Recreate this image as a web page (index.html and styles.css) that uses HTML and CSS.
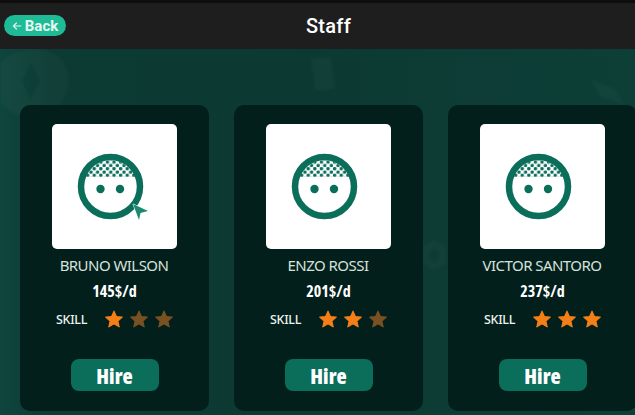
FILE: index.html
```html
<!DOCTYPE html>
<html lang="en">
<head>
<meta charset="utf-8">
<title>Staff</title>
<link rel="stylesheet" href="styles.css">
</head>
<body>
<svg width="0" height="0" class="defs">
  <defs>
    <pattern id="hatch" width="6.6" height="6.6" patternUnits="userSpaceOnUse" x="1" y="36.5">
      <circle cx="1.65" cy="1.65" r="1.75" fill="#0b6e5b"/>
      <circle cx="4.95" cy="4.95" r="1.75" fill="#0b6e5b"/>
    </pattern>
    <symbol id="face" viewBox="0 0 125 125">
      <path d="M33.5 53 A27 27 0 0 1 83.5 53 Z" fill="url(#hatch)"/>
      <circle cx="58.5" cy="62.5" r="29.5" fill="none" stroke="#0b6e5b" stroke-width="6.5"/>
      <circle cx="48.5" cy="65" r="4.2" fill="#0b6e5b"/>
      <circle cx="68" cy="65" r="4.2" fill="#0b6e5b"/>
    </symbol>
    <symbol id="star" viewBox="0 0 24 24">
      <path d="M12 1.5 L15.2 8.6 L23 9.5 L17.2 14.8 L18.9 22.5 L12 18.5 L5.1 22.5 L6.8 14.8 L1 9.5 L8.8 8.6 Z" stroke-linejoin="round" stroke-width="1.5"/>
    </symbol>
  </defs>
</svg>
<header class="topbar">
  <a class="back"><svg class="back-arrow" viewBox="0 0 10 10" width="10" height="10"><path d="M9.2 5H1.5M4.8 1.6 1.4 5l3.4 3.4" fill="none" stroke="currentColor" stroke-width="1.2"/></svg>Back</a>
  <h1 class="title">Staff</h1>
</header>
<main class="stage">
  <svg class="decor" viewBox="0 0 635 366" width="635" height="366">
    <g fill="#fff" opacity=".028">
      <path d="M35 0C60 0 70 16 68 36 66 56 50 68 30 68 8 68-6 52-6 32-6 14 10 0 35 0ZM31 14 22 32 31 50 40 32Z" fill-rule="evenodd"/>
      <path d="M311 10 331 8 335 40 315 42Z"/>
      <path d="M434 190 446 198 446 214 434 222 422 214 422 198ZM434 198 428 206 434 214 440 206Z" fill-rule="evenodd"/>
      <path d="M590 30 615 40 625 56 600 48Z"/>
    </g>
  </svg>
  <div class="cards">
    <article class="card">
      <div class="photo">
        <svg class="face" width="125" height="125"><use href="#face"/><path class="cursor" d="M81 80 96 87 88.5 89 87 96Z"/></svg>
      </div>
      <div class="name">BRUNO WILSON</div>
      <div class="price">145$/d</div>
      <div class="skill">
        <span class="skill-label">SKILL</span>
        <svg class="star on"><use href="#star"/></svg>
        <svg class="star"><use href="#star"/></svg>
        <svg class="star"><use href="#star"/></svg>
      </div>
      <button class="hire">Hire</button>
    </article>
    <article class="card">
      <div class="photo">
        <svg class="face" width="125" height="125"><use href="#face"/></svg>
      </div>
      <div class="name">ENZO ROSSI</div>
      <div class="price">201$/d</div>
      <div class="skill">
        <span class="skill-label">SKILL</span>
        <svg class="star on"><use href="#star"/></svg>
        <svg class="star on"><use href="#star"/></svg>
        <svg class="star"><use href="#star"/></svg>
      </div>
      <button class="hire">Hire</button>
    </article>
    <article class="card">
      <div class="photo">
        <svg class="face" width="125" height="125"><use href="#face"/></svg>
      </div>
      <div class="name">VICTOR SANTORO</div>
      <div class="price">237$/d</div>
      <div class="skill">
        <span class="skill-label">SKILL</span>
        <svg class="star on"><use href="#star"/></svg>
        <svg class="star on"><use href="#star"/></svg>
        <svg class="star on"><use href="#star"/></svg>
      </div>
      <button class="hire">Hire</button>
    </article>
  </div>
</main>
</body>
</html>
```
FILE: styles.css
```css
* { box-sizing: border-box; }
html, body { margin: 0; padding: 0; }
body {
  width: 635px;
  height: 415px;
  overflow: hidden;
  background: #0c3a33;
  font-family: "Noto Sans", "Open Sans", sans-serif;
  display: flex;
  flex-direction: column;
}
.defs { position: absolute; }
.topbar {
  height: 49px;
  flex: none;
  background: #1e1e1e;
  border-top: 3px solid #0d0d0d;
  position: relative;
  display: flex;
  align-items: center;
  justify-content: center;
}
.title {
  margin: 0;
  padding: 0 0 1px 22px;
  font-family: Roboto, sans-serif;
  font-size: 20px;
  font-weight: 500;
  color: #fff;
  letter-spacing: .3px;
}
.back {
  position: absolute;
  left: 4px;
  top: 12px;
  width: 62px;
  height: 21px;
  border-radius: 11px;
  background: #1fbb97;
  color: #e6f8f2;
  font-family: Roboto, sans-serif;
  font-size: 15px;
  font-weight: 700;
  display: flex;
  align-items: center;
  justify-content: center;
  gap: 3px;
}
.stage {
  flex: 1;
  position: relative;
  overflow: hidden;
  background: linear-gradient(90deg, #0e453c 0, #0c3b34 8%, #0c3a33 50%, #0d3f37 100%);
  padding: 56px 0 0 20px;
}
.decor { position: absolute; left: 0; top: 0; filter: blur(1.5px); }
.cards {
  position: relative;
  display: flex;
  gap: 25px;
}
.card {
  flex: none;
  width: 189px;
  height: 306px;
  border-radius: 10px;
  background: #021f1b;
  display: flex;
  flex-direction: column;
  align-items: center;
  padding-top: 19px;
}
.photo {
  width: 125px;
  height: 125px;
  border-radius: 5px;
  background: #fff;
  flex: none;
}
.face { display: block; }
.cursor { fill: #1c8a70; stroke: #fff; stroke-width: 1px; paint-order: stroke; }
.name {
  margin: 6px 1px 0 0;
  font-size: 15px;
  line-height: 20px;
  color: #d6e2de;
  white-space: nowrap;
  letter-spacing: -.55px;
}
.price {
  margin-top: 7px;
  font-family: "Open Sans", sans-serif;
  font-stretch: 75%;
  font-size: 16px;
  line-height: 19px;
  font-weight: 700;
  color: #fff;
}
.skill {
  align-self: flex-start;
  margin: 9px 0 0 36px;
  height: 18px;
  display: flex;
  align-items: center;
  gap: 7px;
}
.skill-label {
  width: 42px;
  font-size: 12.5px;
  font-weight: 500;
  letter-spacing: -.3px;
  color: #eef3f1;
}
.star {
  width: 18px;
  height: 18px;
  fill: #7a5122;
  stroke: #7a5122;
  flex: none;
}
.star.on { fill: #f57f17; stroke: #f57f17; }
.hire {
  margin-top: 31px;
  width: 88px;
  height: 32px;
  border: 0;
  border-radius: 8px;
  background: #0b6e5b;
  color: #fff;
  font-family: "Open Sans", sans-serif;
  font-stretch: 75%;
  font-size: 21px;
  font-weight: 800;
  padding: 1px 0 0;
}
```
